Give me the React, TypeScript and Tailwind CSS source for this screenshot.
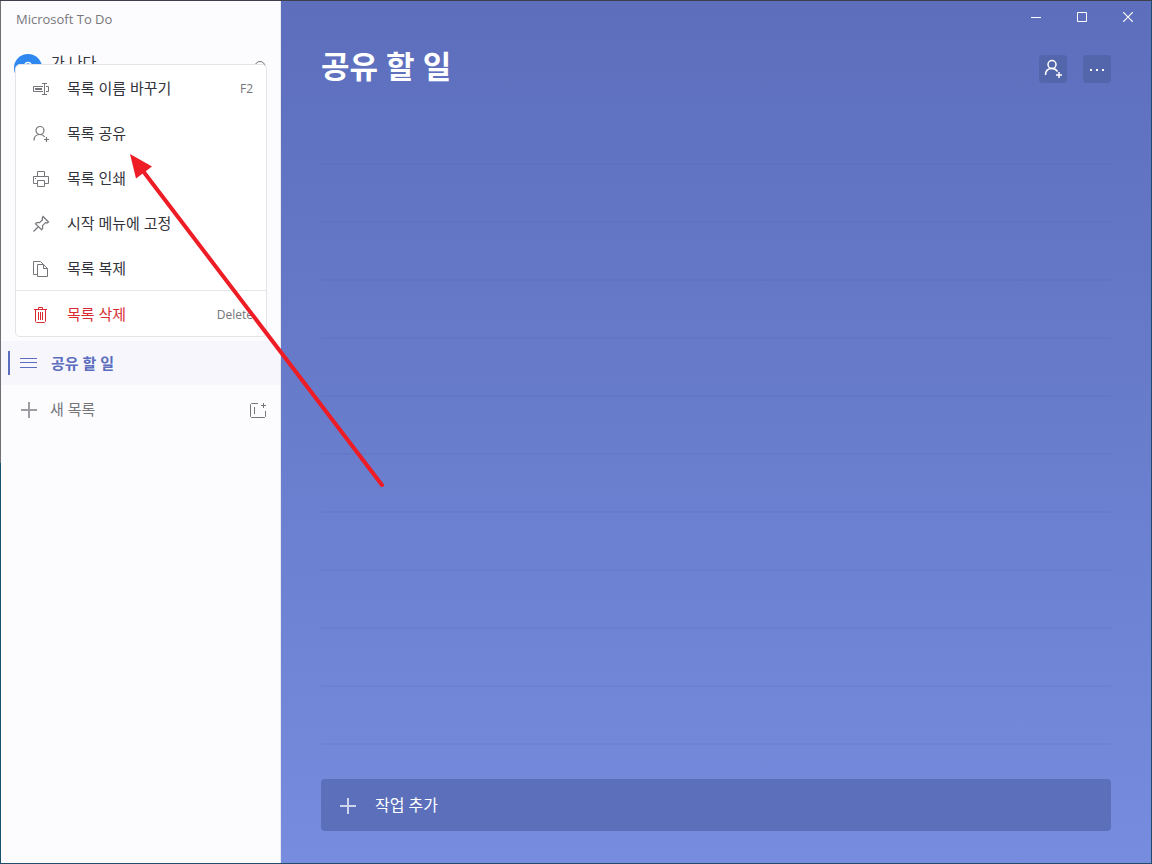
import type { ReactNode } from "react";

type MenuItem = {
  label: string;
  icon: ReactNode;
  shortcut?: string;
};

const iconProps = {
  "aria-hidden": true,
  width: 18,
  height: 18,
  viewBox: "0 0 18 18",
  fill: "none",
  stroke: "currentColor",
  className: "shrink-0",
} as const;

function RenameIcon() {
  return (
    <svg {...iconProps}>
      <path d="M11 6.5H1.5v5H11M14 6.5h2.5v5H14M10 3.5h5M12.5 3.5v11M10 14.5h5" />
      <path d="M3 9h7" strokeWidth={2} />
    </svg>
  );
}

function ShareIcon() {
  return (
    <svg {...iconProps} strokeWidth={1.2}>
      <circle cx="8" cy="5.5" r="4" />
      <path d="M2 15.5c0-3.5 2.2-6 6-6 2.2 0 3.8 1 4.7 2.5M14.5 12v5M12 14.5h5" />
    </svg>
  );
}

function PrintIcon() {
  return (
    <svg {...iconProps}>
      <path d="M5.5 6.5v-5h7v5M5.5 13.5h-4v-7h15v7h-4M5.5 10.5h7v6h-7zM3 8.5h1" />
    </svg>
  );
}

function PinIcon() {
  return (
    <svg {...iconProps} strokeWidth={1.2}>
      <path d="M11 1.5L16.5 7l-1.5 1-1.5-.3-3 3 .2 2.8-1.200 1.200-6-6 1.200-1.200 2.800.2 3-3-.3-1.500zM6.500 11.500l-5 5" />
    </svg>
  );
}

function CopyIcon() {
  return (
    <svg {...iconProps}>
      <path d="M6 14.5H1.5v-13h7l3 3M5.5 4.5h6l4 4v8h-10zM11.5 4.5v4h4" />
    </svg>
  );
}

function TrashIcon() {
  return (
    <svg {...iconProps}>
      <path d="M2 3.5h13M6.5 3.5v-2h4v2M3.5 3.5v12l1 1h8l1-1v-12M6.5 6v8M8.5 6v8M10.5 6v8" />
    </svg>
  );
}

function PlusIcon() {
  return (
    <svg {...iconProps}>
      <path d="M1 9h16M9 1v16" strokeWidth={2} strokeOpacity={0.7} />
    </svg>
  );
}

const menuItems: MenuItem[] = [
  { label: "목록 이름 바꾸기", icon: <RenameIcon />, shortcut: "F2" },
  { label: "목록 공유", icon: <ShareIcon /> },
  { label: "목록 인쇄", icon: <PrintIcon /> },
  { label: "시작 메뉴에 고정", icon: <PinIcon /> },
  { label: "목록 복제", icon: <CopyIcon /> },
];

function ContextMenu() {
  return (
    <div
      role="menu"
      className="absolute top-[63px] left-3.5 right-[13px] bg-white border border-[#e4e4e8] rounded-[5px] text-[15px] text-[#33333b]"
    >
      {menuItems.map((item) => (
        <button
          type="button"
          role="menuitem"
          key={item.label}
          className="w-full h-[45px] pt-0.5 pl-4 pr-[13px] flex items-center text-left"
        >
          <span className="w-[35px] shrink-0 text-[#75757a]">{item.icon}</span>
          {item.label}
          {item.shortcut && (
            <span className="ml-auto text-xs text-[#75757a]">
              {item.shortcut}
            </span>
          )}
        </button>
      ))}
      <button
        type="button"
        role="menuitem"
        className="w-full h-[46px] pt-0.5 pl-4 pr-[13px] flex items-center text-left border-t border-[#e6e6ea] text-[#d92c32]"
      >
        <span className="w-[35px] shrink-0">
          <TrashIcon />
        </span>
        목록 삭제
        <span className="ml-auto text-xs text-[#75757a]">Delete</span>
      </button>
    </div>
  );
}

function Sidebar() {
  return (
    <aside className="relative w-70 shrink-0 bg-[#fcfcff] border-r border-[#e9e9f0]">
      <div className="h-9 pt-0.5 px-[15px] flex items-center text-[13px] text-[#77777b]">
        Microsoft To Do
      </div>

      {/* Account */}
      <div className="h-[62px] px-[13px] flex items-center">
        <span className="w-7 h-7 rounded-full bg-[#2f88f0] flex items-center justify-center text-white">
          <svg
            aria-hidden="true"
            width="16"
            height="14"
            viewBox="0 0 16 14"
            fill="none"
            stroke="currentColor"
            strokeWidth={1.5}
          >
            <circle cx="8" cy="5" r="3.5" />
            <path d="M2 14c0-3 2.5-5.5 6-5.5s6 2.5 6 5.5" />
          </svg>
        </span>
        <span className="ml-[9px] pb-3 text-[15px] text-[#33333b]">
          가 나다
        </span>
        <button
          type="button"
          aria-label="검색"
          className="ml-auto text-[#75757a]"
        >
          <svg
            aria-hidden="true"
            width="16"
            height="16"
            viewBox="0 0 16 16"
            fill="none"
            stroke="currentColor"
          >
            <circle cx="9" cy="6.5" r="5" />
            <path d="M5.500 10L1 14.500" />
          </svg>
        </button>
      </div>

      <ContextMenu />

      {/* Lists */}
      <a
        href="#shared"
        className="mt-[242px] h-11 pl-[7px] flex items-center bg-[#f6f6fc] text-[15px] font-bold text-[#5b6dbd]"
      >
        <span className="w-0.5 h-6 bg-[#5b6dbd]" />
        <svg
          aria-hidden="true"
          className="ml-2.5 mr-[13px]"
          width="18"
          height="18"
          viewBox="0 0 18 18"
          fill="none"
          stroke="currentColor"
        >
          <path d="M0 4.5h17M0 8.5h17M0 13.5h17" />
        </svg>
        공유 할 일
      </a>
      <div className="h-[50px] pl-[19px] pr-[13px] flex items-center justify-between text-[15px] text-[#75757a]">
        <button type="button" className="flex items-center gap-3">
          <PlusIcon />
          <span className="pb-0.5">새 목록</span>
        </button>
        <button type="button" aria-label="새 그룹">
          <svg {...iconProps}>
            <path d="M9 2.5H2.5l-1 1v12l1 1h13l1-1V10M5.5 6v7M14.5 2v5M12 4.5h5" />
          </svg>
        </button>
      </div>
    </aside>
  );
}

function WindowControls() {
  return (
    <div className="h-8 flex justify-end text-white">
      <button
        type="button"
        aria-label="최소화"
        className="w-[46px] flex items-center justify-center"
      >
        <svg
          aria-hidden="true"
          width="10"
          height="10"
          viewBox="0 0 10 10"
          stroke="currentColor"
        >
          <path d="M0 5.5h10" />
        </svg>
      </button>
      <button
        type="button"
        aria-label="최대화"
        className="w-[46px] flex items-center justify-center"
      >
        <svg
          aria-hidden="true"
          width="10"
          height="10"
          viewBox="0 0 10 10"
          fill="none"
          stroke="currentColor"
        >
          <path d="M.5.5h9v9h-9z" />
        </svg>
      </button>
      <button
        type="button"
        aria-label="닫기"
        className="w-[46px] flex items-center justify-center"
      >
        <svg
          aria-hidden="true"
          width="10"
          height="10"
          viewBox="0 0 10 10"
          stroke="currentColor"
          strokeWidth={1.2}
        >
          <path d="M0 0l10 10M10 0L0 10" />
        </svg>
      </button>
    </div>
  );
}

export default function App() {
  return (
    <div
      className="relative min-h-screen flex pl-px border-t border-r border-b border-t-[#3d3f4a] border-r-[#1f4d6b] border-b-[#1f4d6b] bg-[linear-gradient(to_bottom,#707074_462px,#1b5270_462px)]"
      style={{ fontFamily: '"Open Sans", "Noto Sans CJK KR", sans-serif' }}
    >
      <Sidebar />

      <main className="flex-1 flex flex-col bg-linear-to-b from-[#5c6ebc] to-[#778cde]">
        <WindowControls />
        <header className="mt-[22px] px-10 h-7 flex items-center gap-4 text-white">
          <h1 className="mr-auto pb-1.5 text-[31px] leading-7 font-bold">
            공유 할 일
          </h1>
          <button
            type="button"
            aria-label="목록 공유"
            className="w-7 h-7 rounded bg-[#5366ab] flex items-center justify-center"
          >
            <svg
              aria-hidden="true"
              width="20"
              height="20"
              viewBox="0 0 20 20"
              fill="none"
              stroke="currentColor"
              strokeWidth={1.5}
            >
              <circle cx="9" cy="5.5" r="4" />
              <path d="M2.5 16c0-4 2.5-6.500 6.500-6.500 2.800 0 4.500 1.300 5.500 3M16 13v6M13 16h6" />
            </svg>
          </button>
          <button
            type="button"
            aria-label="옵션 더 보기"
            className="w-7 h-7 pt-0.5 rounded bg-[#5366ab] flex items-center justify-center"
          >
            <svg
              aria-hidden="true"
              width="16"
              height="4"
              viewBox="0 0 16 4"
              fill="currentColor"
            >
              <path d="M1 1h2v2H1zM7 1h2v2H7zM13 1h2v2h-2z" />
            </svg>
          </button>
        </header>

        {/* Empty task rows */}
        <div className="flex-1 mt-6 mx-10 bg-[repeating-linear-gradient(to_bottom,transparent_0_56px,#4658a01c_56px_58px)]" />

        <label className="mx-10 mt-3.5 mb-8 h-[52px] pl-[18px] rounded bg-[#5c6fbb] flex items-center gap-[18px] text-white">
          <span className="pt-0.5">
            <PlusIcon />
          </span>
          <input
            type="text"
            aria-label="작업 추가"
            placeholder="작업 추가"
            className="flex-1 bg-transparent outline-none text-base placeholder:text-white"
          />
        </label>
      </main>

      {/* Arrow pointing at the share entry */}
      <svg
        aria-hidden="true"
        className="absolute top-[152px] left-32 pointer-events-none"
        width="260"
        height="340"
        viewBox="128 153 260 340"
      >
        <path
          d="M143 171L382 485"
          stroke="#ee1c25"
          strokeWidth={4}
          strokeLinecap="round"
        />
        <path d="M130 154l22 12.5-16 12z" fill="#ee1c25" />
      </svg>
    </div>
  );
}
